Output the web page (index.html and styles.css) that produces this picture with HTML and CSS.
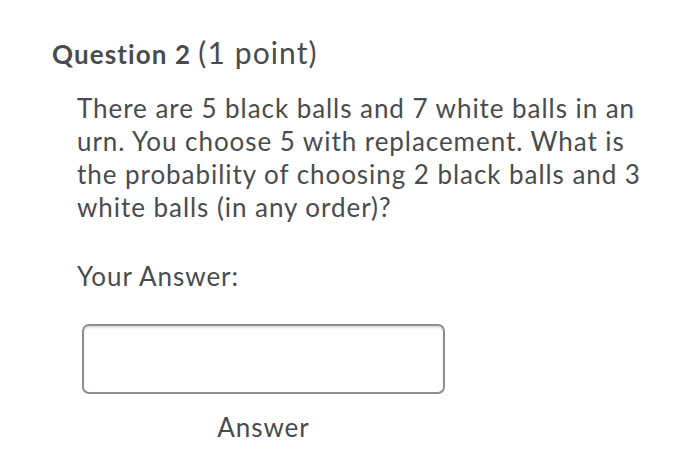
FILE: index.html
```html
<!DOCTYPE html>
<html>
<head>
<meta charset="utf-8">
<link rel="stylesheet" href="styles.css">
</head>
<body>
<div class="page">
  <h2 class="qtitle"><span class="qnum">Question 2</span> <span class="qpts">(1 point)</span></h2>
  <div class="qbody">
    <p class="qtext">There are 5 black balls and 7 white balls in an urn. You choose 5 with replacement. What is the probability of choosing 2 black balls and 3 white balls (in any order)?</p>
    <p class="label">Your Answer:</p>
    <div class="answer">
      <div class="inputbox"></div>
      <div class="caption">Answer</div>
    </div>
  </div>
</div>
</body>
</html>
```
FILE: styles.css
```css
html, body {
  margin: 0;
  padding: 0;
  background: #ffffff;
}
body {
  font-family: Lato, "Noto Sans", sans-serif;
  color: #494c4e;
}
.page {
  padding: 34px 0 0 52px;
}
.qtitle {
  margin: 0;
  font-weight: normal;
  line-height: 36px;
  white-space: nowrap;
  letter-spacing: 1.1px;
}
.qnum {
  font-weight: bold;
  font-size: 26px;
}
.qpts {
  font-size: 30px;
}
.qbody {
  padding: 19px 0 0 25px;
  width: 590px;
  letter-spacing: 0.95px;
}
.qtext {
  margin: 0;
  font-size: 26px;
  line-height: 33px;
}
.label {
  margin: 36px 0 0;
  font-size: 26px;
  line-height: 33px;
}
.answer {
  margin-top: 31px;
  margin-left: 5px;
  width: 363px;
  display: flex;
  flex-direction: column;
  align-items: center;
}
.inputbox {
  width: 359px;
  height: 66px;
  border: 2px solid #8e8e8e;
  border-radius: 7px;
  box-shadow: inset 0 2px 2px rgba(0,0,0,0.12);
}
.caption {
  margin-top: 17px;
  font-size: 26px;
  line-height: 33px;
}
```
